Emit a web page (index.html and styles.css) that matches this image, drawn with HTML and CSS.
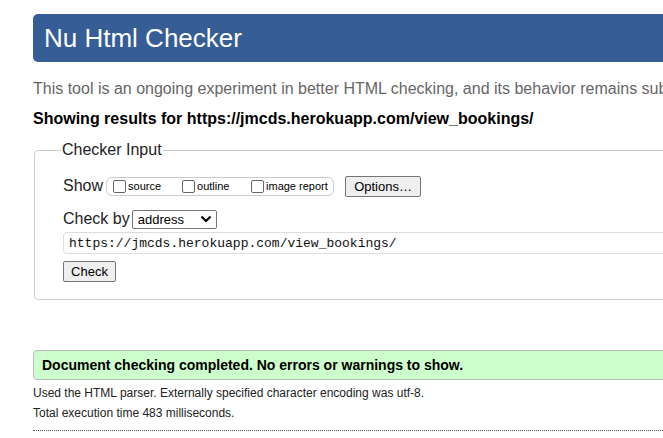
FILE: index.html
```html
<!DOCTYPE html>
<html lang="en">
<head>
<meta charset="utf-8">
<title>Nu Html Checker</title>
<link rel="stylesheet" href="styles.css">
</head>
<body>
<div class="page">
  <h1 class="title">Nu Html Checker</h1>
  <p class="intro">This tool is an ongoing experiment in better HTML checking, and its behavior remains subject to change</p>
  <p class="showing">Showing results for https://jmcds.herokuapp.com/view_bookings/</p>
  <fieldset class="checker">
    <legend class="legend">Checker Input</legend>
    <div class="inner">
      <div class="row">
        <span class="label">Show</span>
        <span class="pill">
          <label class="opt opt-source"><span class="box"></span>source</label>
          <label class="opt opt-outline"><span class="box"></span>outline</label>
          <label class="opt"><span class="box"></span>image report</label>
        </span>
        <button class="btn btn-options" type="button">Options…</button>
      </div>
      <div class="row row-checkby">
        <span class="label">Check by</span>
        <span class="select">address<svg class="chev" width="12" height="8" viewBox="0 0 12 8"><path d="M1.5 1.5 L6 6 L10.5 1.5" fill="none" stroke="#000" stroke-width="2"/></svg></span>
      </div>
      <div class="urlbox">https://jmcds.herokuapp.com/view_bookings/</div>
      <button class="btn btn-check" type="button">Check</button>
    </div>
  </fieldset>
  <div class="success">Document checking completed. No errors or warnings to show.</div>
  <p class="meta">Used the HTML parser. Externally specified character encoding was utf-8.</p>
  <p class="meta">Total execution time 483 milliseconds.</p>
  <hr class="dots">
</div>
</body>
</html>
```
FILE: styles.css
```css
html { overflow: hidden; }
body {
  margin: 0;
  font-family: "Liberation Sans", Arial, sans-serif;
  color: #000;
  background: #fff;
}
.page {
  width: 760px;
  padding: 14px 0 0 33px;
}
.title {
  margin: 0;
  height: 48px;
  box-sizing: border-box;
  padding: 8px 11px 0;
  background: #365d95;
  color: #fff;
  border-radius: 5px;
  font-weight: normal;
  font-size: 26px;
  line-height: 32px;
  white-space: nowrap;
}
.intro {
  margin: 16px 0 0;
  color: #666;
  font-size: 16px;
  line-height: 22px;
  white-space: nowrap;
}
.showing {
  margin: 8px 0 0;
  font-weight: bold;
  font-size: 16px;
  line-height: 22px;
  white-space: nowrap;
}
.checker {
  margin: 11px 0 0 1px;
  padding: 8px 0 17px 0;
  border: 1px solid #ccc;
  border-radius: 4px;
  min-width: 0;
}
.legend {
  margin-left: 26px;
  padding: 0 1px;
  font-size: 16px;
  color: #222;
}
.inner {
  padding: 8px 0 0 28px;
}
.row {
  display: flex;
  align-items: center;
  height: 22px;
}
.label { font-size: 16px; color: #222; }
.pill {
  display: inline-flex;
  align-items: center;
  margin-left: 3px;
  width: 228px;
  height: 19px;
  box-sizing: border-box;
  border: 1px solid #ccc;
  border-radius: 6px;
  padding-left: 6px;
}
.opt {
  display: inline-flex;
  align-items: center;
  font-size: 11px;
  color: #000;
}
.opt-source { width: 69px; }
.opt-outline { width: 69px; }
.box {
  width: 13px;
  height: 13px;
  box-sizing: border-box;
  border: 1px solid #666;
  border-radius: 2px;
  margin-right: 2px;
  background: #fff;
}
.btn {
  font-family: "Liberation Sans", Arial, sans-serif;
  font-size: 13px;
  background: #efefef;
  border: 1px solid #767676;
  border-radius: 2px;
  color: #000;
  padding: 0 6px;
  height: 21px;
}
.btn-options { margin-left: 11px; width: 76px; }
.row-checkby { margin-top: 11px; }
.select {
  display: inline-flex;
  align-items: center;
  justify-content: space-between;
  margin-left: 2px;
  width: 85px;
  height: 19px;
  box-sizing: border-box;
  border: 1px solid #767676;
  border-radius: 2px;
  padding: 0 4px 0 5px;
  font-size: 13px;
}
.urlbox {
  margin-top: 2px;
  height: 22px;
  box-sizing: border-box;
  border: 1px solid #ddd;
  border-radius: 4px;
  padding: 3px 5px 0;
  font-family: "Liberation Mono", "DejaVu Sans Mono", monospace;
  font-size: 13px;
  line-height: 16px;
  color: #111;
}
.btn-check { display: block; margin-top: 7px; width: 53px; height: 21px; }
.success {
  margin-top: 50px;
  height: 30px;
  box-sizing: border-box;
  background: #ccffcc;
  border: 1px solid #bbb;
  border-radius: 4px;
  padding: 5px 8px 0;
  font-weight: bold;
  font-size: 14px;
  line-height: 18px;
}
.meta {
  margin: 6px 0 0;
  font-size: 12px;
  line-height: 14px;
  color: #222;
}
.meta + .meta { margin-top: 6px; }
.dots {
  margin: 10px 0 0;
  border: 0;
  border-top: 1px dotted #555;
  height: 0;
}
```
